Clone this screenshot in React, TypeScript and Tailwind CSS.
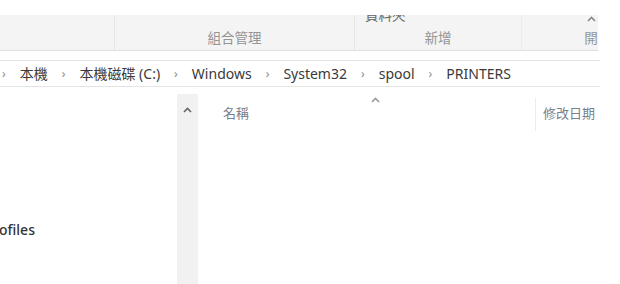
import React from 'react'

const crumbs = ['本機', '本機磁碟 (C:)', 'Windows', 'System32', 'spool', 'PRINTERS']

function Chevron({ className = '' }: { className?: string }) {
  return (
    <svg width="9" height="6" viewBox="0 0 9 6" className={className}>
      <path d="M1 5 L4.5 1.5 L8 5" fill="none" stroke="currentColor" strokeWidth="1.6" />
    </svg>
  )
}

export default function App() {
  return (
    <div
      className="w-[620px] h-[284px] bg-white overflow-hidden flex flex-col"
      style={{ fontFamily: '"Noto Sans", "Noto Sans CJK TC", sans-serif' }}
    >
      {/* Ribbon */}
      <div className="h-[15px] shrink-0" />
      <div className="relative w-[598px] h-[36px] shrink-0 bg-[#f4f4f4] border-b border-[#e0e0e0] flex overflow-hidden text-[13.5px] text-[#959595]">
        <div className="w-[115px] shrink-0 border-r border-[#e6e6e6]" />
        <div className="w-[240px] shrink-0 border-r border-[#e6e6e6] flex items-end justify-center pb-[2px]">組合管理</div>
        <div className="relative w-[167px] shrink-0 border-r border-[#ebebeb] flex items-end justify-center pb-[2px]">
          <span className="absolute left-[10px] top-[-10px] text-[#666]">資料夾</span>
          新增
        </div>
        <div className="w-[138px] shrink-0 flex items-end justify-center pb-[2px]">開</div>
        <Chevron className="absolute right-[2px] top-[1px] text-[#888]" />
      </div>

      {/* Address bar */}
      <div className="h-[9px] shrink-0" />
      <div className="w-[600px] h-[27px] shrink-0 border-y border-[#e3e3e3] flex items-center gap-[14px] pl-[2px] text-[14px] text-[#3a3a3a]">
        {crumbs.map(c => (
          <React.Fragment key={c}>
            <span className="text-[#8a8a8a] text-[12px]">›</span>
            <span>{c}</span>
          </React.Fragment>
        ))}
      </div>

      {/* Main */}
      <div className="flex flex-1 min-h-0">
        <div className="w-[177px] shrink-0 pt-[132px] text-[14px] text-[#333] font-medium">
          <span className="ml-[-1px]">ofiles</span>
        </div>
        <div className="w-[21px] shrink-0 mt-[7px] bg-[#f1f1f1] flex justify-center pt-[13px]">
          <Chevron className="text-[#666]" />
        </div>
        <div className="w-[402px] shrink-0 flex flex-col">
          <div className="relative h-[40px] mt-[7px] flex items-center text-[13px] text-[#77808d]">
            <span className="ml-[25px]">名稱</span>
            <Chevron className="absolute left-[173px] top-[3px] text-[#9a9a9a]" />
            <div className="ml-auto w-[1px] h-[33px] bg-[#ececec]" />
            <span className="ml-[7px] w-[57px] overflow-hidden whitespace-nowrap">修改日期</span>
          </div>
        </div>
      </div>
    </div>
  )
}
